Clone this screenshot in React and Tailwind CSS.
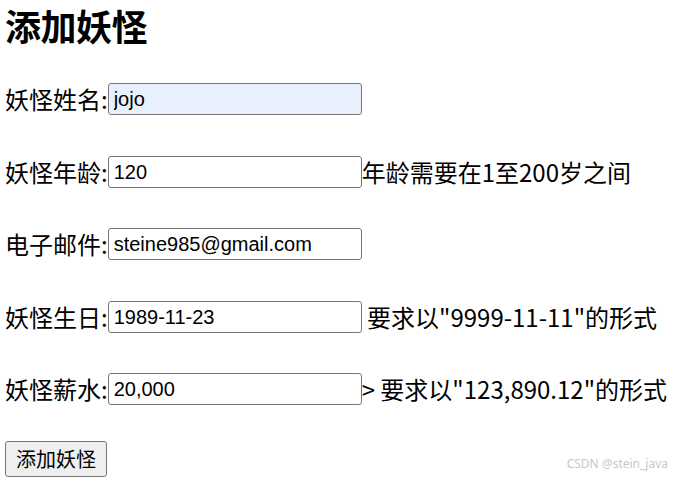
import React, { useState } from 'react';

const rows = [
  { label: '妖怪姓名:', value: 'jojo', autofill: true, hint: '' },
  { label: '妖怪年龄:', value: '120', hint: '年龄需要在1至200岁之间' },
  { label: '电子邮件:', value: 'steine985@gmail.com', hint: '' },
  { label: '妖怪生日:', value: '1989-11-23', hint: ' 要求以"9999-11-11"的形式' },
  { label: '妖怪薪水:', value: '20,000', hint: '> 要求以"123,890.12"的形式' }
];

const App = () => {
  const [form, setForm] = useState(rows.map((r) => r.value));

  return (
    <div className="relative w-[675px] h-[481px] bg-white text-black overflow-hidden font-['Noto_Sans_CJK_SC','Noto_Sans',sans-serif]">
      <div className="flex flex-col pl-[5px]">
        {/* Title */}
        <h2 className="text-[36px] font-bold leading-[50px] tracking-[-0.5px]">添加妖怪</h2>

        {/* Fields */}
        <div className="flex flex-col gap-[36.5px] mt-[31px]">
          {rows.map((row, i) => (
            <div key={row.label} className="flex items-center h-[36px] text-[24px] leading-[36px]">
              <span>{row.label}</span>
              <input
                type="text"
                value={form[i]}
                onChange={(e) => {
                  const next = [...form];
                  next[i] = e.target.value;
                  setForm(next);
                }}
                className={
                  'w-[254px] h-[32px] px-[5px] border border-[#767676] rounded-[3px] text-[20px] text-black outline-none font-["Liberation_Sans",Arial,sans-serif] ' +
                  (row.autofill ? 'bg-[#e8f0fe]' : 'bg-white')
                }
              />
              {row.hint && <span className="whitespace-pre">{row.hint}</span>}
            </div>
          ))}
        </div>

        {/* Submit */}
        <div className="mt-[34px]">
          <button
            type="button"
            className="h-[36px] px-[10px] bg-[#efefef] border border-[#767676] rounded-[3px] text-[20px] leading-[34px]"
          >
            添加妖怪
          </button>
        </div>
      </div>

      {/* Watermark */}
      <div className="absolute right-[7px] bottom-[8px] text-[12px] text-[#c8c8c8] font-['Noto_Sans',sans-serif]">
        CSDN @stein_java
      </div>
    </div>
  );
};

export default App;
